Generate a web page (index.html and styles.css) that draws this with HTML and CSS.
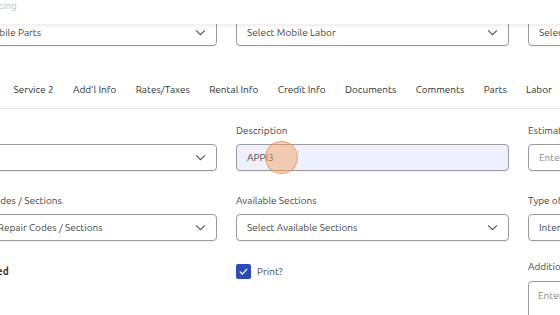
FILE: index.html
```html
<!DOCTYPE html>
<html lang="en">
<head>
    <meta charset="UTF-8">
    <meta name="viewport" content="width=device-width, initial-scale=1.0">
    <title>Work Order</title>
    <link rel="stylesheet" href="styles.css">
</head>
<body>
    <div class="page">
        <div class="topbar">
            <span class="crumb">Pricing</span>
        </div>

        <div class="form-grid first-row">
            <div class="select-box"><span>Select Mobile Parts</span><svg class="chev" viewBox="0 0 12 8"><path d="M1 1.5l5 5 5-5"/></svg></div>
            <div class="select-box"><span>Select Mobile Labor</span><svg class="chev" viewBox="0 0 12 8"><path d="M1 1.5l5 5 5-5"/></svg></div>
            <div class="select-box"><span>Select Mobile Rates</span><svg class="chev" viewBox="0 0 12 8"><path d="M1 1.5l5 5 5-5"/></svg></div>
        </div>

        <nav class="tabs">
            <a>Service 1</a>
            <a>Service 2</a>
            <a>Add'l Info</a>
            <a>Rates/Taxes</a>
            <a>Rental Info</a>
            <a>Credit Info</a>
            <a>Documents</a>
            <a>Comments</a>
            <a>Parts</a>
            <a>Labor</a>
        </nav>

        <div class="form-grid details">
            <div class="field">
                <label>Code</label>
                <div class="select-box"><span></span><svg class="chev" viewBox="0 0 12 8"><path d="M1 1.5l5 5 5-5"/></svg></div>
            </div>
            <div class="field">
                <label>Description</label>
                <div class="text-box filled">
                    <span>APPI3</span>
                    <span class="click-dot"></span>
                </div>
            </div>
            <div class="field">
                <label>Estimated Hours</label>
                <div class="text-box"><span class="placeholder">Enter Estimated Hours</span></div>
            </div>

            <div class="field">
                <label>Repair Codes / Sections</label>
                <div class="select-box"><span>Select Repair Codes / Sections</span><svg class="chev" viewBox="0 0 12 8"><path d="M1 1.5l5 5 5-5"/></svg></div>
            </div>
            <div class="field">
                <label>Available Sections</label>
                <div class="select-box"><span>Select Available Sections</span><svg class="chev" viewBox="0 0 12 8"><path d="M1 1.5l5 5 5-5"/></svg></div>
            </div>
            <div class="field">
                <label>Type of Work</label>
                <div class="text-box"><span>Internal</span></div>
            </div>

            <div class="field check-row">
                <span class="bold-label">Completed</span>
            </div>
            <div class="field check-row">
                <span class="checkbox"><svg viewBox="0 0 16 16"><path d="M3.5 8.2l3 3 6-6.5"/></svg></span>
                <span class="check-label">Print?</span>
            </div>
            <div class="field notes">
                <label>Additional Notes</label>
                <div class="text-area"><span class="placeholder">Enter Additional Notes</span></div>
            </div>
        </div>
    </div>
</body>
</html>
```

FILE: styles.css
```css
body {
    margin: 0;
    padding: 0;
    background: #ffffff;
    font-family: 'Ubuntu', 'Noto Sans', sans-serif;
    font-size: 10px;
    color: #333;
    overflow: hidden;
}

.page {
    width: 900px;
    margin-left: -56px; /* page is scrolled to the right */
}

.topbar {
    position: relative;
    z-index: 2;
    height: 24px;
    background: #ffffff;
    box-shadow: 0 2px 4px rgba(0, 0, 0, 0.08);
}

.crumb {
    display: inline-block;
    margin-left: 42px;
    line-height: 12px;
    color: #bdbdbd;
    font-size: 10px;
}

.form-grid {
    display: grid;
    grid-template-columns: 273px 273px 273px;
    column-gap: 19px;
}

.first-row {
    margin-top: -5px;
}

/* lower section has a narrower first column */
.details {
    grid-template-columns: 260px 273px 273px;
    margin-left: 13px;
}

.select-box,
.text-box {
    box-sizing: border-box;
    height: 27px;
    display: flex;
    align-items: center;
    justify-content: space-between;
    padding: 0 10px;
    border: 1px solid #9a9a9a;
    border-radius: 4px;
    background: #ffffff;
    color: #444;
    font-size: 10px;
    box-shadow: 0 1px 1px rgba(0, 0, 0, 0.06);
}

.chev {
    width: 11px;
    height: 7px;
    fill: none;
    stroke: #555;
    stroke-width: 1.3;
}

.tabs {
    display: flex;
    gap: 19.3px;
    margin-top: 24px;
    margin-left: 10px;
    height: 38px;
    align-items: center;
    border-bottom: 1px solid #e6e6e6;
}

.tabs a {
    color: #2f2f2f;
    font-size: 10px;
    white-space: nowrap;
}

.field label {
    display: block;
    height: 13px;
    margin-bottom: 6px;
    color: #444;
    font-size: 10px;
}

.form-grid .field {
    margin-top: 16px;
}

.form-grid .field:nth-child(n+4) {
    margin-top: 24px;
}

.text-box {
    position: relative;
    justify-content: flex-start;
}

.text-box.filled {
    background: #eef0fd;
}

.placeholder {
    color: #888;
}

.click-dot {
    position: absolute;
    left: 28px;
    top: -4px;
    width: 31px;
    height: 31px;
    border-radius: 50%;
    background: rgba(245, 155, 90, 0.45);
    border: 1.5px solid rgba(240, 150, 80, 0.8);
}

.check-row {
    display: flex;
    align-items: center;
    height: 16px;
    gap: 6px;
}

.form-grid .field.check-row {
    margin-top: 22px;
}

.bold-label {
    font-weight: 600;
    color: #333;
}

.checkbox {
    width: 15px;
    height: 15px;
    border-radius: 2px;
    background: #2d4bb8;
    display: inline-flex;
    align-items: center;
    justify-content: center;
}

.checkbox svg {
    width: 13px;
    height: 13px;
    fill: none;
    stroke: #ffffff;
    stroke-width: 1.6;
}

.check-label {
    color: #444;
}

.form-grid .field.notes {
    margin-top: 20px;
}

.notes label {
    margin-bottom: 7px;
}

.text-area {
    box-sizing: border-box;
    height: 60px;
    padding: 8px 9px;
    border: 1px solid #9a9a9a;
    border-radius: 4px;
}
```
